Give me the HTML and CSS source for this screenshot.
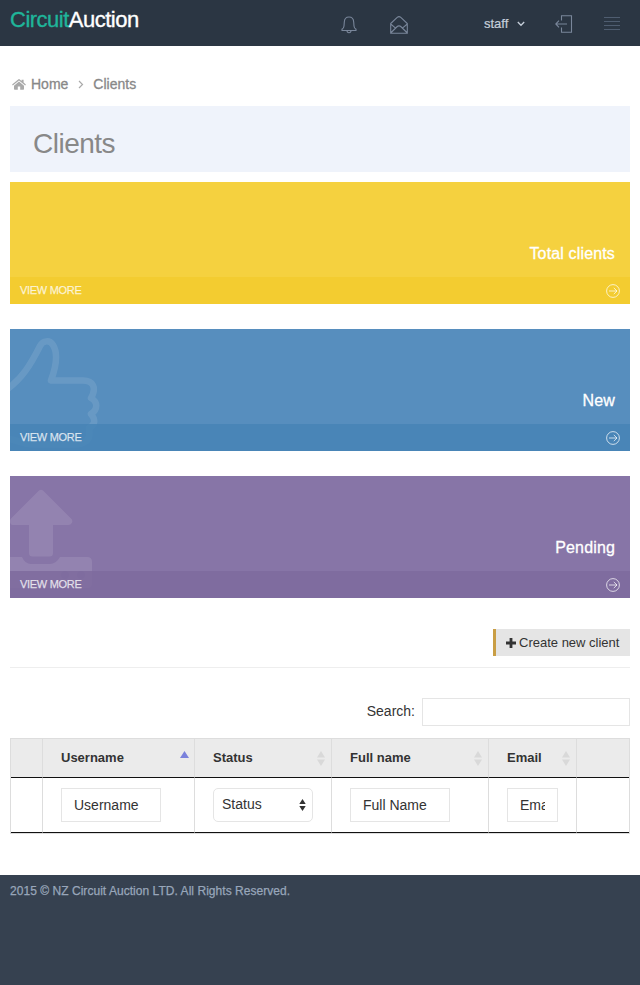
FILE: index.html
```html
<!DOCTYPE html>
<html lang="en">
<head>
<meta charset="utf-8">
<title>Clients</title>
<link rel="stylesheet" href="styles.css">
</head>
<body>
<header class="topbar">
  <div class="logo"><span>Circuit</span>Auction</div>
  <nav class="nav">
    <svg class="bell" width="16" height="18" viewBox="0 0 16 18"><path d="M1 14.500h14v-1.300c-1.400-.6-1.900-1.700-2-3.200L12.700 6C12.500 2.500 10.500 1 8 1S3.500 2.500 3.300 6L3 10c-.1 1.500-.6 2.600-2 3.200zM6 14.500c0 3 4 3 4 0"/></svg>
    <svg class="mail" width="18" height="18" viewBox="0 0 18 18"><path d="M.7 7.500 7.200 1.400q1.800-1.500 3.600 0l6.500 6.100v9.700H.7zM.7 8l4.600 3.800M17.300 8l-4.600 3.800M.7 17l6-6q2.300-2.200 4.600 0l6 6"/></svg>
    <span class="user">staff</span>
    <svg class="caret" width="8" height="6" viewBox="0 0 8 6"><path d="M.8 1 4 4.300 7.200 1"/></svg>
    <svg class="logout" width="18" height="18" viewBox="0 0 18 18"><path d="M6.500 5.500V.7h10v16.500h-10v-4.700M12 9H.8M4 5.600.8 9 4 12.400"/></svg>
    <svg class="menu" width="16" height="14" viewBox="0 0 16 14"><path d="M0 .5h16M0 4.500h16M0 8.500h16M0 12.500h16"/></svg>
  </nav>
</header>
<main class="content">
  <div class="crumbs">
    <svg class="home" width="14" height="11" viewBox="0 0 14 11"><path d="M7 2.500 12 6.700V10q0 .7-.7.7H8.200V7.500H5.800v3.200H2.700Q2 10.700 2 10V6.700z"/><path d="M6.200.4q.8-.6 1.600 0L9.600 2V.8h2v2.800L13.900 5.600l-.7.8L7 1.400.8 6.400.1 5.600z"/></svg>
    <span>Home</span>
    <svg class="chevron" width="6" height="9" viewBox="0 0 6 9"><path d="M1 1l3.500 3.500L1 8"/></svg>
    <span>Clients</span>
  </div>
  <h1>Clients</h1>
  <section class="stats">
    <article class="stat yellow">
      <div class="stat-name">Total clients</div>
      <div class="more"><span>View more</span><svg width="14" height="14" viewBox="0 0 14 14"><circle cx="7" cy="7" r="6.400"/><path d="M3 7h8M7.800 3.900 11 7 7.800 10.100"/></svg></div>
    </article>
    <article class="stat blue">
      <svg class="picture outline" width="91" height="122" viewBox="0 0 91 122"><path d="M-4 61C12 50 21 35 30 17c3-6 10-6 13-1 5 8 3 22-2 35.500h32c10 0 14 7 8 17.500 7 4 7 11 0 16 5 6 4 11-2 14 2 11-2 15.500-13 16.500H25c-14 0-14-4-29-6"/></svg>
      <div class="stat-name">New</div>
      <div class="more"><span>View more</span><svg width="14" height="14" viewBox="0 0 14 14"><circle cx="7" cy="7" r="6.400"/><path d="M3 7h8M7.800 3.900 11 7 7.800 10.100"/></svg></div>
    </article>
    <article class="stat purple">
      <svg class="picture" width="91" height="122" viewBox="0 0 91 122"><path d="M29 14.500q2-1.700 4 0L61.500 43q1.500 2 .3 4-1 2-3.500 2H43v28q0 3.500-3.500 3.500h-17Q19 80.500 19 77V49H3q-3 0-3-4 0-1.500 1.500-3z"/><path fill-rule="evenodd" d="M0 81h12q3 7 9 7h19q6 0 10-7h27q5 0 5 5v21q0 5-5 5H0zM51 99a4 4 0 1 0 8 0 4 4 0 1 0-8 0M67 99a4 4 0 1 0 8 0 4 4 0 1 0-8 0"/></svg>
      <div class="stat-name">Pending</div>
      <div class="more"><span>View more</span><svg width="14" height="14" viewBox="0 0 14 14"><circle cx="7" cy="7" r="6.400"/><path d="M3 7h8M7.800 3.900 11 7 7.800 10.100"/></svg></div>
    </article>
  </section>
  <div class="actions">
    <button class="create"><svg width="10" height="10" viewBox="0 0 10 10"><path d="M3.600 0h2.800v3.600H10v2.800H6.400V10H3.600V6.400H0V3.600h3.600z"/></svg>Create new client</button>
  </div>
  <label class="search"><span>Search:</span><input type="text"></label>
  <table>
    <colgroup><col class="c-select"><col class="c-user"><col class="c-status"><col class="c-name"><col class="c-email"><col class="c-action"></colgroup>
    <thead>
      <tr>
        <th></th>
        <th><div class="th">Username<svg class="sorted" width="9" height="14" viewBox="0 0 9 14"><path d="M4.500 0 9 7H0z"/></svg></div></th>
        <th><div class="th">Status<svg width="8" height="15" viewBox="0 0 8 15"><path d="M4 0 8 6.500H0zM0 8.500h8L4 15z"/></svg></div></th>
        <th><div class="th">Full name<svg width="8" height="15" viewBox="0 0 8 15"><path d="M4 0 8 6.500H0zM0 8.500h8L4 15z"/></svg></div></th>
        <th><div class="th">Email<svg width="8" height="15" viewBox="0 0 8 15"><path d="M4 0 8 6.500H0zM0 8.500h8L4 15z"/></svg></div></th>
        <th></th>
      </tr>
    </thead>
    <tbody>
      <tr>
        <td></td>
        <td><input class="field" type="text" placeholder="Username"></td>
        <td><div class="field select">Status<svg width="7" height="12" viewBox="0 0 7 12"><path d="M3.500 0 6.700 5H.3zM.3 7h6.400L3.500 12z"/></svg></div></td>
        <td><input class="field" type="text" placeholder="Full Name"></td>
        <td><input class="field short" type="text" placeholder="Email"></td>
        <td></td>
      </tr>
    </tbody>
  </table>
</main>
<footer>2015 © NZ Circuit Auction LTD. All Rights Reserved.</footer>
</body>
</html>
```
FILE: styles.css
```css
* { box-sizing: border-box; }
body {
  margin: 0;
  min-height: 985px;
  display: flex;
  flex-direction: column;
  background: #fff;
  color: #333;
  font: 14px/20px "Liberation Sans", Arial, sans-serif;
}
svg { display: block; flex: none; }

.topbar {
  height: 46px;
  background: #2b3643;
  display: flex;
  justify-content: space-between;
  padding: 0 20px 0 10px;
}
.logo { color: #fff; font-size: 22px; line-height: 40px; letter-spacing: -.5px; -webkit-text-stroke: .35px #fff; }
.logo span { color: #1fb59a; -webkit-text-stroke-color: #1fb59a; }
.nav { display: flex; align-items: center; height: 47px; }
.nav svg { fill: none; stroke: #79869a; stroke-width: 1.1; }
.bell { margin: 2px 33px 0 0; }
.mail { margin: 2px 76px 0 0; }
.user { color: #c6cfda; font-size: 13px; width: 25px; white-space: nowrap; -webkit-text-stroke: .2px #c6cfda; }
.nav .caret { margin: 0 30px 0 8px; stroke: #c6cfda; stroke-width: 1.3; }
.logout { margin-right: 31px; }
.nav .menu { stroke: #4f5d70; stroke-width: 1; }

.content { padding: 28px 10px 0; }
.crumbs { display: flex; align-items: center; height: 20px; padding-left: 2px; color: #888; -webkit-text-stroke: .3px #888; }
.home { fill: #aaa; margin-right: 5px; }
.chevron { fill: none; stroke: #aaa; stroke-width: 1.2; margin: 1px 9px 0 10px; }
h1 {
  margin: 12px 0 10px;
  height: 66px;
  padding: 5px 0 0 23px;
  background: #eff3fb;
  color: #888;
  font-size: 28px;
  font-weight: 400;
  line-height: 65px;
  letter-spacing: -.5px;
}

.stats { display: grid; gap: 25px; }
.stat { position: relative; height: 122px; overflow: hidden; color: #fff; display: flex; flex-direction: column; justify-content: flex-end; }
.yellow { background: #f5d13f; }
.blue { background: #578ebe; }
.purple { background: #8775a7; }
.picture { position: absolute; left: 0; top: 0; fill: #fff; opacity: .1; }
.picture.outline { fill: none; stroke: #fff; stroke-width: 6.500; stroke-linejoin: round; }
.stat-name { padding: 0 15px 13px; text-align: right; font-size: 16px; line-height: 20px; letter-spacing: .15px; -webkit-text-stroke: .3px #fff; }
.more {
  position: relative;
  height: 27px;
  padding: 0 10px;
  display: flex;
  align-items: center;
  justify-content: space-between;
  color: rgba(255, 255, 255, .72);
  font-size: 11px;
  letter-spacing: -.3px;
  text-transform: uppercase;
}
.more span { margin-top: -1px; -webkit-text-stroke: .25px rgba(255, 255, 255, .72); }
.more svg { fill: none; stroke: currentColor; margin-top: 1px; }
.yellow .more { background: #f3cc30; }
.blue .more { background: rgba(70, 132, 182, .85); }
.purple .more { background: rgba(126, 107, 158, .85); }

.actions { margin-top: 31px; height: 39px; display: flex; justify-content: flex-end; align-items: flex-start; border-bottom: 1px solid #eee; }
.create {
  width: 137px;
  height: 27px;
  display: flex;
  align-items: center;
  gap: 3px;
  margin: 0;
  padding: 0 0 0 10px;
  border: 0;
  border-left: 3px solid #c99e45;
  background: #e5e5e5;
  color: #333;
  font: 13px "Liberation Sans", Arial, sans-serif;
  white-space: nowrap;
}
.create svg { fill: #333; }
.search { display: flex; justify-content: flex-end; align-items: center; gap: 7px; margin-top: 30px; height: 28px; }
.search span { margin-top: -2px; }
.search input { width: 208px; height: 28px; border: 1px solid #e5e5e5; }

table { width: 620px; margin-top: 12px; table-layout: fixed; border: 1px solid #ddd; border-collapse: separate; border-spacing: 0; }
.c-select { width: 32px; }
.c-user { width: 152px; }
.c-status { width: 137px; }
.c-name { width: 157px; }
.c-email { width: 88px; }
.c-action { width: 52px; }
th, td { padding: 0; border-right: 1px solid #ddd; border-bottom: 1px solid #111; }
th:last-child, td:last-child { border-right: 0; }
th { height: 39px; background: #ebebeb; }
td { height: 55px; padding-left: 18px; }
.th { display: flex; justify-content: space-between; align-items: center; padding: 0 6px 0 18px; font-size: 13px; }
.th svg { fill: #d9d9d9; margin-top: 1px; }
.th .sorted { fill: #7b82dc; margin: -1px -1px 0 0; }
td:first-child, td:last-child { padding: 0; }
.field { display: block; width: 100px; height: 34px; margin: 0; padding: 6px 12px; border: 1px solid #e5e5e5; background: #fff; color: #333; font: 14px/20px "Liberation Sans", Arial, sans-serif; }
.field::placeholder { color: #333; opacity: 1; }
.short { width: 51px; }
.select { display: flex; align-items: center; justify-content: space-between; padding: 0 6px 2px 8px; border-radius: 5px; }
.select svg { fill: #333; margin-top: 2px; }

footer { flex: 1; margin-top: 41px; padding: 6px 10px; background: #364150; color: #98a6ba; font-size: 12px; letter-spacing: .04px; -webkit-text-stroke: .25px #98a6ba; }
```
